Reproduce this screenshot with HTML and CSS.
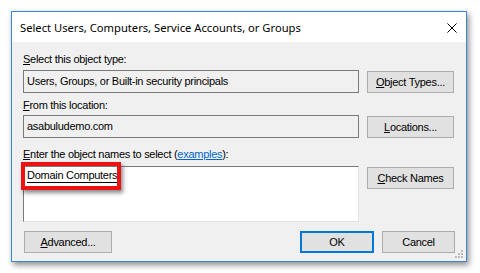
FILE: index.html
```html
<!DOCTYPE html>
<html>
<head>
<meta charset="utf-8">
<link rel="stylesheet" href="styles.css">
</head>
<body>
<div class="dialog">
  <div class="titlebar">
    <span class="title">Select Users, Computers, Service Accounts, or Groups</span>
    <svg class="close" width="10" height="10" viewBox="0 0 10 10"><path d="M0.5 0.5 L9.5 9.5 M9.5 0.5 L0.5 9.5" stroke="#000" stroke-width="1" fill="none"/></svg>
  </div>
  <div class="body">
    <div class="label l1"><u>S</u>elect this object type:</div>
    <div class="row">
      <div class="field ro">Users, Groups, or Built-in security principals</div>
      <div class="btn"><u>O</u>bject Types...</div>
    </div>
    <div class="label l2"><u>F</u>rom this location:</div>
    <div class="row">
      <div class="field ro">asabuludemo.com</div>
      <div class="btn"><u>L</u>ocations...</div>
    </div>
    <div class="label l3"><u>E</u>nter the object names to select (<span class="link">examples</span>):</div>
    <div class="row">
      <div class="field multi"><span class="resolved">Domain Computers</span></div>
      <div class="btn"><u>C</u>heck Names</div>
    </div>
    <div class="footer">
      <div class="btn wide"><u>A</u>dvanced...</div>
      <div class="actions">
        <div class="btn ok">OK</div>
        <div class="btn cancel">Cancel</div>
      </div>
    </div>
    <svg class="grip" width="9" height="9" viewBox="0 0 9 9">
      <rect x="6" y="0" width="2" height="2" fill="#bcbcbc"/>
      <rect x="3" y="3" width="2" height="2" fill="#bcbcbc"/>
      <rect x="6" y="3" width="2" height="2" fill="#bcbcbc"/>
      <rect x="0" y="6" width="2" height="2" fill="#bcbcbc"/>
      <rect x="3" y="6" width="2" height="2" fill="#bcbcbc"/>
      <rect x="6" y="6" width="2" height="2" fill="#bcbcbc"/>
    </svg>
  </div>
  <div class="highlight"></div>
</div>
</body>
</html>
```
FILE: styles.css
```css
html, body {
  margin: 0;
  padding: 0;
  background: #ffffff;
}
body {
  width: 480px;
  height: 273px;
  overflow: hidden;
  font-family: "Liberation Sans", Arial, sans-serif;
  font-size: 11px;
  letter-spacing: -0.28px;
  color: #000;
}
.dialog {
  position: relative;
  margin: 11px 0 0 11px;
  width: 454px;
  height: 249px;
  border: 1px solid #3a86d6;
  box-shadow: 2px 3px 6px rgba(0, 0, 0, 0.45);
  background: #f0f0f0;
  display: flex;
  flex-direction: column;
}
.titlebar {
  height: 30px;
  background: #ffffff;
  display: flex;
  align-items: center;
  justify-content: space-between;
  padding: 0 9px 0 8px;
}
.title {
  font-family: "Noto Sans", "Open Sans", sans-serif;
  font-size: 11.2px;
  letter-spacing: 0;
  color: #000;
  padding-top: 1px;
}
.close {
  display: block;
  margin-top: 1px;
}
.body {
  position: relative;
  flex: 1;
  padding: 11px 11px 0 11px;
  display: flex;
  flex-direction: column;
}
.label {
  height: 13px;
  line-height: 13px;
  white-space: nowrap;
}
.l1 { margin-bottom: 4px; }
.l2 { margin-top: 6px; margin-bottom: 3px; }
.l3 { margin-top: 10px; margin-bottom: 5px; }
.row {
  display: flex;
  align-items: flex-start;
  gap: 8px;
}
.field {
  box-sizing: border-box;
  width: 336px;
  height: 23px;
  border: 1px solid #7a7a7a;
  padding: 0 3px;
  line-height: 21px;
  white-space: nowrap;
}
.field.ro {
  background: #f0f0f0;
}
.field.multi {
  height: 56px;
  background: #ffffff;
  border-color: #7a7a7a #e3e3e3 #e3e3e3 #7a7a7a;
  line-height: 13px;
  padding-top: 2px;
}
.resolved {
  display: inline-block;
  line-height: 13px;
  border-bottom: 1px solid #000;
  border-right: 1px solid #000;
  padding-right: 1px;
}
.link {
  color: #0066cc;
  text-decoration: underline;
}
.btn {
  box-sizing: border-box;
  width: 87px;
  height: 22px;
  margin-top: 1px;
  background: #e1e1e1;
  border: 1px solid #adadad;
  display: flex;
  align-items: center;
  justify-content: center;
  white-space: nowrap;
}
.footer {
  margin-top: 9px;
  display: flex;
  justify-content: space-between;
}
.footer .btn { margin-top: 0; }
.wide { width: 88px; margin-left: 1px; }
.actions {
  display: flex;
  gap: 8px;
}
.btn.ok {
  width: 74px;
  border: 2px solid #0078d7;
}
.btn.cancel {
  width: 73px;
}
.grip {
  position: absolute;
  right: 2px;
  bottom: 2px;
}
.highlight {
  position: absolute;
  left: 9px;
  top: 150px;
  width: 92px;
  height: 20px;
  border: 4px solid #ee1111;
  box-shadow: 2px 3px 4px rgba(0, 0, 0, 0.45);
}
```
